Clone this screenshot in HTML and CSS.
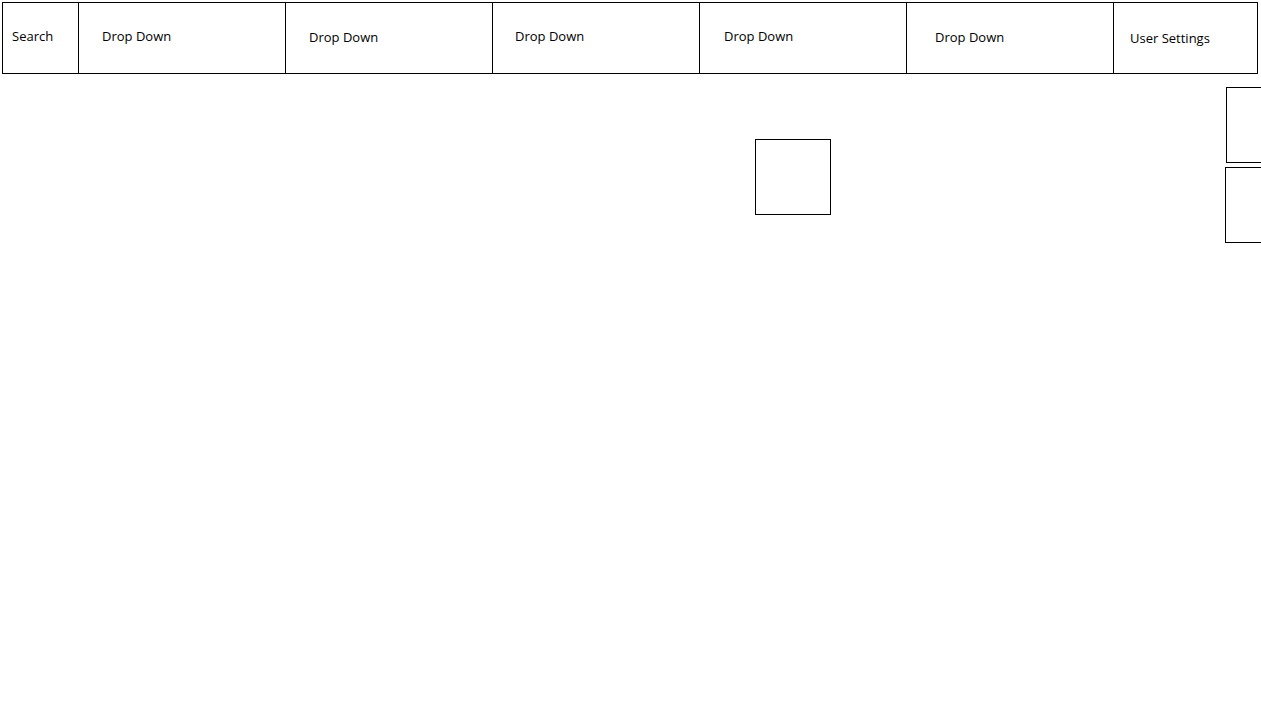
FILE: index.html
```html
<!DOCTYPE html>
<html lang="en">
<head>
<meta charset="utf-8">
<title>Wireframe</title>
<link rel="stylesheet" href="styles.css">
</head>
<body>
<nav class="navbar">
  <div class="nav-cell nav-search">Search</div>
  <div class="nav-cell nav-dd dd-1">Drop Down</div>
  <div class="nav-cell nav-dd dd-2">Drop Down</div>
  <div class="nav-cell nav-dd dd-3">Drop Down</div>
  <div class="nav-cell nav-dd dd-4">Drop Down</div>
  <div class="nav-cell nav-dd dd-5">Drop Down</div>
  <div class="nav-cell nav-user">User Settings</div>
</nav>
<main class="canvas">
  <div class="box box-center"></div>
  <div class="box box-side-1"></div>
  <div class="box box-side-2"></div>
</main>
</body>
</html>
```

FILE: styles.css
```css
html, body {
  margin: 0;
  padding: 0;
  background: #ffffff;
  overflow: hidden;
  width: 1261px;
  height: 708px;
}

body {
  font-family: "Open Sans", "Noto Sans", sans-serif;
  font-size: 13px;
  color: #000000;
}

.navbar {
  display: flex;
  box-sizing: border-box;
  width: 1256px;
  height: 72px;
  margin: 2px 0 0 2px;
  border: 1px solid #000000;
}

.nav-cell {
  box-sizing: border-box;
  display: flex;
  align-items: center;
  height: 100%;
  border-right: 1px solid #000000;
  white-space: nowrap;
}

.nav-search {
  width: 76px;
  padding-left: 9px;
  padding-bottom: 5px;
}

.nav-dd {
  width: 207px;
}

.dd-1 { padding-left: 23px; padding-bottom: 5px; }
.dd-2 { padding-left: 23px; padding-bottom: 3px; }
.dd-3 { padding-left: 22px; padding-bottom: 5px; }
.dd-4 { padding-left: 24px; padding-bottom: 5px; }
.dd-5 { padding-left: 28px; padding-bottom: 3px; }

.nav-user {
  flex: 1;
  border-right: none;
  padding-left: 16px;
  padding-bottom: 1px;
}

.canvas {
  position: relative;
  height: 634px;
}

.box {
  position: absolute;
  box-sizing: border-box;
  border: 1px solid #000000;
  background: #ffffff;
}

.box-center {
  left: 755px;
  top: 65px;
  width: 76px;
  height: 76px;
}

.box-side-1 {
  left: 1226px;
  top: 13px;
  width: 80px;
  height: 76px;
}

.box-side-2 {
  left: 1225px;
  top: 93px;
  width: 80px;
  height: 76px;
}
```
